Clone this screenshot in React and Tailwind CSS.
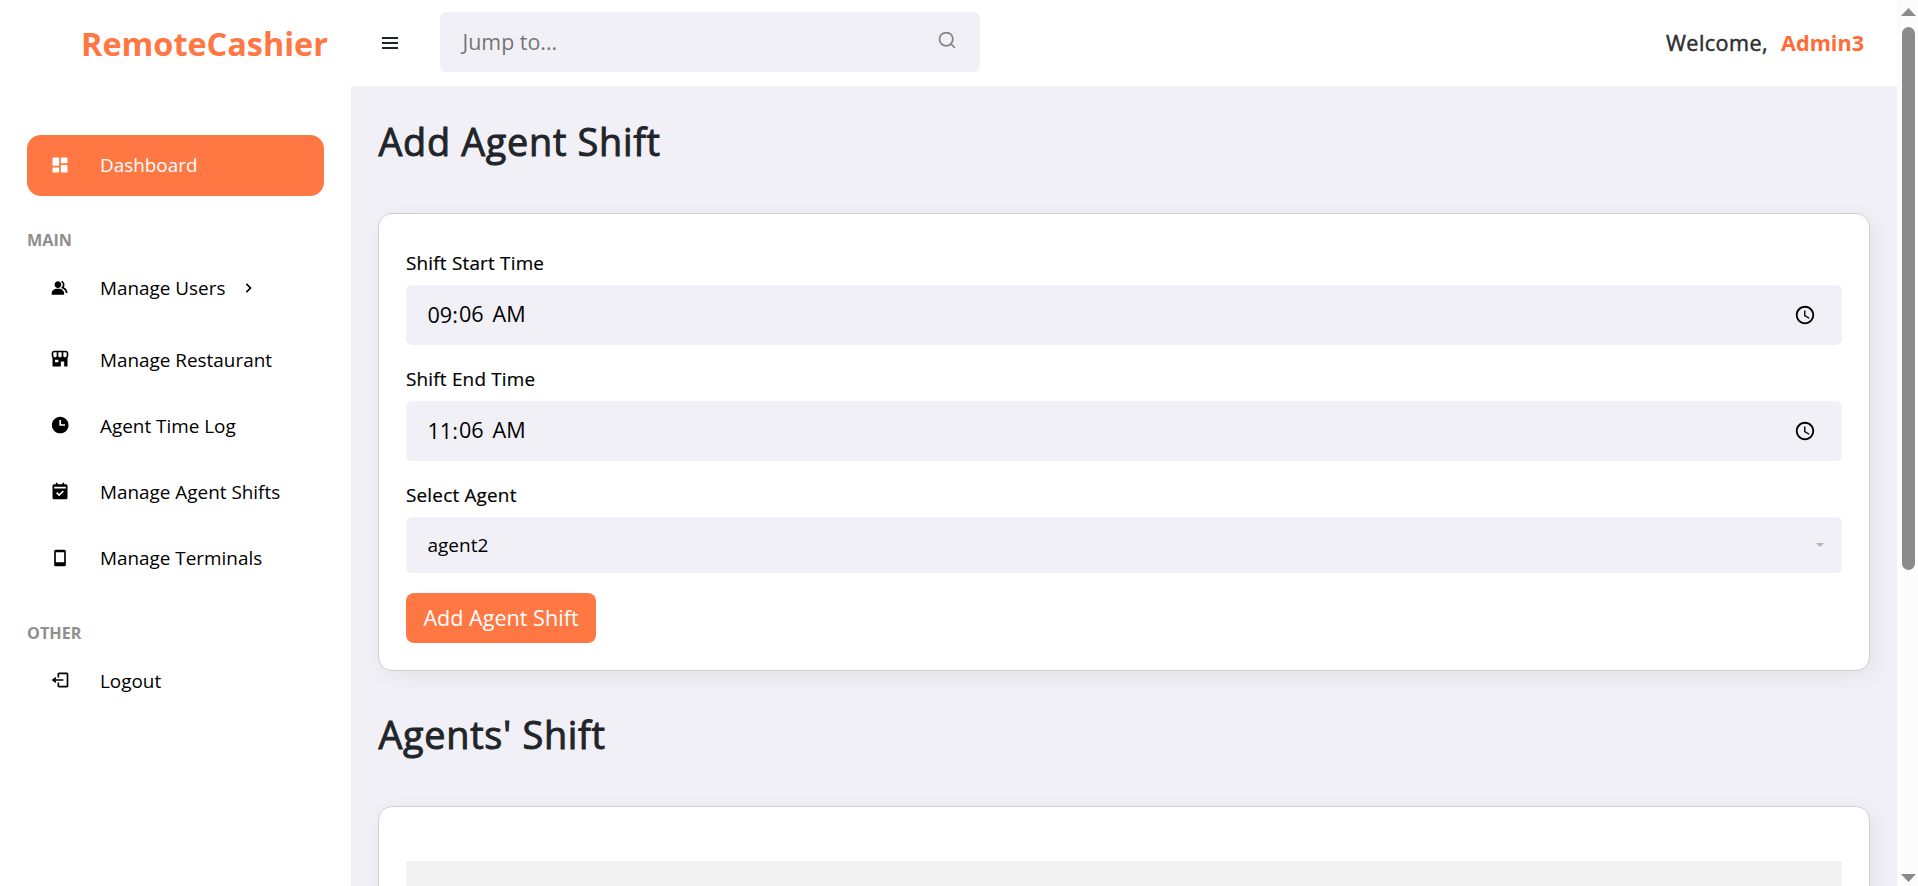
import {
  BiSolidDashboard, BiSolidGroup, BiSolidStoreAlt, BiSolidTime, BiSolidCalendarCheck,
  BiMobile, BiLogOut, BiMenu, BiChevronRight,
} from 'react-icons/bi'
import { Search } from 'lucide-react'

function NavItem({ icon: Icon, label, className = '', iconClass = 'mb-[2px]', children }) {
  return (
    <a className={`flex items-center pl-[22.5px] text-[18.9px] ${className}`}>
      <Icon className={`size-5 shrink-0 ${iconClass}`} />
      <span className="ml-[30.5px]">{label}</span>
      {children}
    </a>
  )
}

function SectionTitle({ className, children }) {
  return <div className={`text-[16.2px] leading-6 font-bold text-[#8f8f8f] ${className}`}>{children}</div>
}

function Heading({ className, children }) {
  return (
    <h1 className={`pl-[0.5px] text-[37.8px] leading-[52px] tracking-[0.7px] text-[#212529] [-webkit-text-stroke:0.95px_#212529] ${className}`}>
      {children}
    </h1>
  )
}

function Label({ children }) {
  return (
    <div className="mb-[9px] text-[18.9px] leading-[26px] tracking-[0.2px] [-webkit-text-stroke:0.2px_#000]">
      {children}
    </div>
  )
}

function ClockIcon() {
  return (
    <svg viewBox="0 0 24 24" className="size-[22px]" fill="currentColor">
      <path d="M11.99 2C6.47 2 2 6.48 2 12s4.47 10 9.99 10C17.52 22 22 17.52 22 12S17.52 2 11.99 2zM12 20c-4.42 0-8-3.58-8-8s3.58-8 8-8 8 3.58 8 8-3.58 8-8 8zm.5-13H11v6l5.25 3.15.75-1.23-4.5-2.67z" />
    </svg>
  )
}

function TimeField({ label, hour, rest }) {
  return (
    <div className="mb-[21px]">
      <Label>{label}</Label>
      <div className="flex h-[60px] items-center justify-between rounded-[6px] bg-[#f1f0f6] pr-[26px] pl-[21.5px] text-[21.6px]">
        <div className="flex items-center whitespace-pre">
          <span className="pt-px">{hour}:</span>
          <span className="ml-px pb-px">{rest}</span>
          <span className="ml-[9px] pb-px">AM</span>
        </div>
        <ClockIcon />
      </div>
    </div>
  )
}

function Card({ className, children }) {
  return (
    <section className={`rounded-[14px] border border-[#cfcfd2] bg-white px-[27px] shadow-[5px_5px_25px_rgba(0,0,0,0.06)] ${className}`}>
      {children}
    </section>
  )
}

export default function App() {
  return (
    <div className="flex h-[886px] w-[1918px] overflow-hidden bg-white font-['Open_Sans',sans-serif] text-black">
      <aside className="w-[351px] shrink-0 px-[27px]">
        <div className="pt-[21px] pl-[54px] text-[32.4px] leading-[44px] font-bold text-[#ff7743]">RemoteCashier</div>
        <nav className="mt-[70px] flex flex-col">
          <NavItem icon={BiSolidDashboard} label="Dashboard" className="h-[61px] rounded-[14px] bg-[#ff7743] pb-px text-white" iconClass="" />
          <SectionTitle className="mt-[32px]">MAIN</SectionTitle>
          <NavItem icon={BiSolidGroup} label="Manage Users" className="mt-[3px] h-[66px]" iconClass="mb-px">
            <BiChevronRight className="ml-[13px] size-5" />
          </NavItem>
          <NavItem icon={BiSolidStoreAlt} label="Manage Restaurant" className="mt-[6px] h-[66px]" />
          <NavItem icon={BiSolidTime} label="Agent Time Log" className="h-[66px]" />
          <NavItem icon={BiSolidCalendarCheck} label="Manage Agent Shifts" className="h-[66px]" />
          <NavItem icon={BiMobile} label="Manage Terminals" className="h-[66px]" iconClass="mb-px" />
          <SectionTitle className="mt-[30px]">OTHER</SectionTitle>
          <NavItem icon={BiLogOut} label="Logout" className="mt-[3px] h-[66px]" />
        </nav>
      </aside>

      <div className="flex min-w-0 flex-1 flex-col">
        <header className="flex h-[86px] shrink-0 items-start pt-3 pr-[33px] pl-[27px]">
          <BiMenu className="mt-[19px] size-6 text-[#212529]" />
          <div className="ml-[38px] flex h-[60px] w-[540px] items-center justify-between rounded-[6px] bg-[#f1f0f6] pr-[23px] pl-[22.5px]">
            <span className="text-[21.4px] text-[#757575]">Jump to...</span>
            <Search className="mb-1 size-5 text-[#858585]" strokeWidth={2.1} />
          </div>
          <div className="ml-auto flex gap-[13px] pt-4 text-[21.6px] leading-[30px]">
            <span className="tracking-[0.45px] text-[#2c2f33] [-webkit-text-stroke:0.5px_#2c2f33]">Welcome,</span>
            <span className="font-bold text-[#ff6a35]">Admin3</span>
          </div>
        </header>

        <main className="min-h-0 flex-1 overflow-hidden bg-[#f1f0f6] px-[27px]">
          <Heading className="pt-[30px]">Add Agent Shift</Heading>
          <Card className="mt-[45px] h-[458px] pt-[36px]">
            <TimeField label="Shift Start Time" hour="09" rest="06" />
            <TimeField label="Shift End Time" hour="11" rest="06" />
            <Label>Select Agent</Label>
            <div className="flex h-[56px] items-center justify-between rounded-[6px] bg-[#f1f0f6] pr-[18px] pl-[21.5px] text-[19px]">
              <span>agent2</span>
              <svg viewBox="0 0 8 4" className="h-1 w-2 fill-[#b4b4b8]"><path d="M0 0h8L4 4z" /></svg>
            </div>
            <button className="mt-[20px] flex h-[50px] w-[190px] items-center justify-center rounded-[8px] bg-[#ff7743] text-[21.6px] text-white">
              Add Agent Shift
            </button>
          </Card>
          <Heading className="mt-[38px]">Agents' Shift</Heading>
          <Card className="mt-[45px] h-[400px] pt-[54px]">
            <div className="h-[80px] bg-[#f3f3f3]" />
          </Card>
        </main>
      </div>

      <div className="flex w-[21px] shrink-0 flex-col items-center bg-[#fcfcfc] pt-2 pb-1 pl-px">
        <svg viewBox="0 0 15 8" className="h-2 w-[15px] fill-[#8b8b8b]"><path d="M7.5 0 15 8H0z" /></svg>
        <div className="mt-[11px] h-[543px] w-[13px] rounded-full bg-[#8b8b8b]" />
        <svg viewBox="0 0 15 8" className="mt-auto h-2 w-[15px] fill-[#8b8b8b]"><path d="M0 0h15L7.5 8z" /></svg>
      </div>
    </div>
  )
}
